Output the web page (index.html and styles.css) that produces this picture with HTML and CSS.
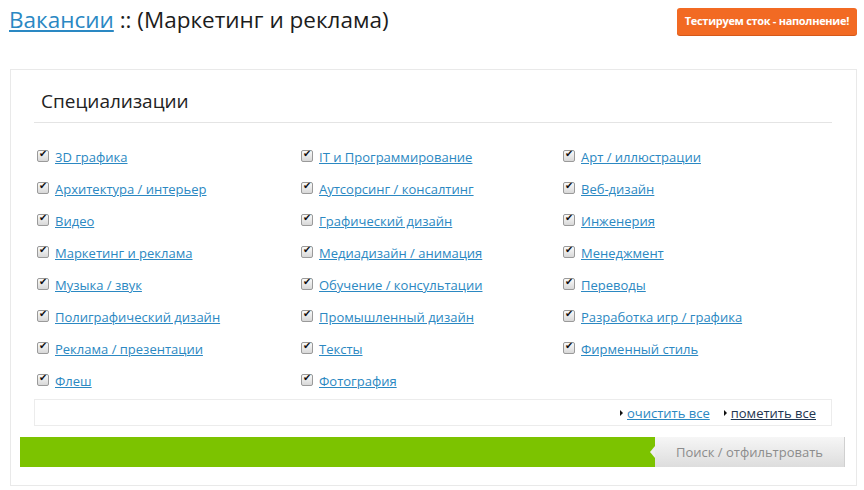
FILE: index.html
```html
<!DOCTYPE html>
<html lang="ru">
<head>
  <meta charset="UTF-8">
  <title>Вакансии :: (Маркетинг и реклама)</title>
  <link rel="stylesheet" href="styles.css">
</head>
<body>
  <div class="top">
    <h1><a href="#">Вакансии</a> :: (Маркетинг и реклама)</h1>
    <a class="promo" href="#">Тестируем сток - наполнение!</a>
  </div>

  <div class="panel">
    <div class="spec">
      <h2>Специализации</h2>

      <!-- список специализаций, по три колонки -->
      <div class="grid">
        <label class="item"><span class="cb"></span><a href="#">3D графика</a></label>
        <label class="item"><span class="cb"></span><a href="#">IT и Программирование</a></label>
        <label class="item"><span class="cb"></span><a href="#">Арт / иллюстрации</a></label>

        <label class="item"><span class="cb"></span><a href="#">Архитектура / интерьер</a></label>
        <label class="item"><span class="cb"></span><a href="#">Аутсорсинг / консалтинг</a></label>
        <label class="item"><span class="cb"></span><a href="#">Веб-дизайн</a></label>

        <label class="item"><span class="cb"></span><a href="#">Видео</a></label>
        <label class="item"><span class="cb"></span><a href="#">Графический дизайн</a></label>
        <label class="item"><span class="cb"></span><a href="#">Инженерия</a></label>

        <label class="item"><span class="cb"></span><a href="#">Маркетинг и реклама</a></label>
        <label class="item"><span class="cb"></span><a href="#">Медиадизайн / анимация</a></label>
        <label class="item"><span class="cb"></span><a href="#">Менеджмент</a></label>

        <label class="item"><span class="cb"></span><a href="#">Музыка / звук</a></label>
        <label class="item"><span class="cb"></span><a href="#">Обучение / консультации</a></label>
        <label class="item"><span class="cb"></span><a href="#">Переводы</a></label>

        <label class="item"><span class="cb"></span><a href="#">Полиграфический дизайн</a></label>
        <label class="item"><span class="cb"></span><a href="#">Промышленный дизайн</a></label>
        <label class="item"><span class="cb"></span><a href="#">Разработка игр / графика</a></label>

        <label class="item"><span class="cb"></span><a href="#">Реклама / презентации</a></label>
        <label class="item"><span class="cb"></span><a href="#">Тексты</a></label>
        <label class="item"><span class="cb"></span><a href="#">Фирменный стиль</a></label>

        <label class="item"><span class="cb"></span><a href="#">Флеш</a></label>
        <label class="item"><span class="cb"></span><a href="#">Фотография</a></label>
      </div>

      <div class="tools">
        <a href="#">очистить все</a>
        <a href="#" class="visited">пометить все</a>
      </div>
    </div>

    <div class="submit">
      <div class="bar"></div>
      <button class="go">Поиск / отфильтровать</button>
    </div>
  </div>
</body>
</html>
```

FILE: styles.css
```css
body {
  margin: 0;
  padding: 0 7px 0 9px;
  font-family: "Open Sans", "DejaVu Sans", sans-serif;
  color: #222;
  background: #fff;
}

a {
  color: #2b88c2;
}

.top {
  display: flex;
  justify-content: space-between;
  align-items: flex-start;
  height: 69px;
}

h1 {
  margin: 5px 0 0;
  font-size: 22.5px;
  font-weight: normal;
  line-height: 30px;
  color: #1c1c1c;
}

h1 a {
  color: #2a88c3;
}

.promo {
  margin-top: 8px;
  padding: 0 8px;
  height: 27px;
  line-height: 26px;
  font-size: 11px;
  font-weight: bold;
  color: #fff;
  text-decoration: none;
  background: #f26a23;
  border-radius: 3px;
  box-shadow: 0 1px 0 #d4581a;
  letter-spacing: -0.3px;
}

/* основной блок с фильтром */
.panel {
  margin-left: 1px;
  border: 1px solid #e9e9e9;
  padding: 0 11px 18px 9px;
}

.spec {
  padding: 0 13px 0 14px;
}

h2 {
  margin: 0;
  padding: 20px 0 10px 7px;
  font-size: 19px;
  font-weight: normal;
  line-height: 22px;
  color: #222;
  border-bottom: 1px solid #e4e4e4;
}

.grid {
  display: grid;
  grid-template-columns: 264px 262px 1fr;
  padding: 18px 0 0 3px;
}

.item {
  display: flex;
  align-items: center;
  height: 32px;
  font-size: 13px;
}

.item a {
  margin-left: 6px;
}

/* старый серый чекбокс с галочкой */
.cb {
  position: relative;
  width: 10px;
  height: 10px;
  border: 1px solid #9a9a9a;
  border-radius: 2px;
  background: linear-gradient(#fafafa, #d8d8d8);
  margin-top: -3px;
}

.cb::after {
  content: "\2714";
  position: absolute;
  left: 1px;
  top: -3px;
  font-family: "DejaVu Sans", sans-serif;
  font-size: 10px;
  color: #111;
}

.tools {
  display: flex;
  justify-content: flex-end;
  gap: 14px;
  margin-top: 2px;
  height: 25px;
  align-items: center;
  padding-right: 15px;
  border: 1px solid #ececec;
  font-size: 13px;
}

.tools a::before {
  content: "";
  display: inline-block;
  border-left: 3px solid #111;
  border-top: 3px solid transparent;
  border-bottom: 3px solid transparent;
  margin-right: 4px;
  vertical-align: 2px;
}

.tools a.visited {
  color: #1e3550;
}

.submit {
  display: flex;
  margin-top: 11px;
  height: 30px;
}

.bar {
  flex: 1;
  background: #7cc300;
}

.go {
  position: relative;
  width: 190px;
  border: none;
  border-right: 1px solid #d0d0d0;
  font-family: inherit;
  font-size: 13px;
  color: #8c8c8c;
  background: linear-gradient(#f6f6f6, #dddddd);
  padding: 0;
}

.go::before {
  content: "";
  position: absolute;
  left: -5px;
  top: 9px;
  border-right: 5px solid #eeeeee;
  border-top: 6px solid transparent;
  border-bottom: 6px solid transparent;
}
```
